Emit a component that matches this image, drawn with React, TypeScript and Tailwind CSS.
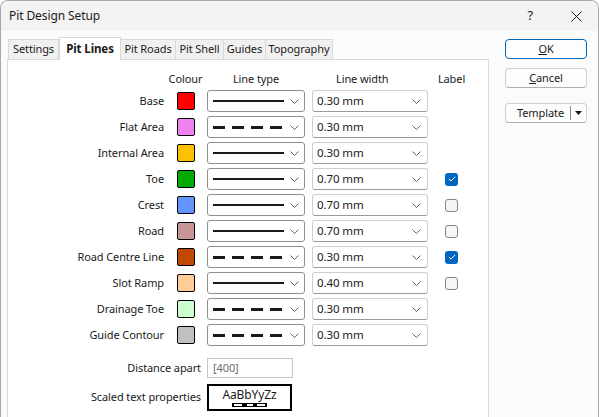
import React from "react";

type Row = {
  name: string;
  swatch: string;
  dashed: boolean;
  width: string;
  label: null | boolean;
};

const rows: Row[] = [
  { name: "Base", swatch: "bg-[#ff0000]", dashed: false, width: "0.30 mm", label: null },
  { name: "Flat Area", swatch: "bg-[#ee82ee]", dashed: true, width: "0.30 mm", label: null },
  { name: "Internal Area", swatch: "bg-[#ffc000]", dashed: false, width: "0.30 mm", label: null },
  { name: "Toe", swatch: "bg-[#00aa00]", dashed: false, width: "0.70 mm", label: true },
  { name: "Crest", swatch: "bg-[#6495ff]", dashed: false, width: "0.70 mm", label: false },
  { name: "Road", swatch: "bg-[#c89696]", dashed: false, width: "0.70 mm", label: false },
  { name: "Road Centre Line", swatch: "bg-[#c04800]", dashed: true, width: "0.30 mm", label: true },
  { name: "Slot Ramp", swatch: "bg-[#ffcc99]", dashed: false, width: "0.40 mm", label: false },
  { name: "Drainage Toe", swatch: "bg-[#ccffcc]", dashed: true, width: "0.30 mm", label: null },
  { name: "Guide Contour", swatch: "bg-[#c0c0c0]", dashed: true, width: "0.30 mm", label: null },
];

const tabs = [
  { name: "Settings", w: "w-[51px]" },
  { name: "Pit Lines", w: "w-[62px]", active: true },
  { name: "Pit Roads", w: "w-[56px]" },
  { name: "Pit Shell", w: "w-[49px]" },
  { name: "Guides", w: "w-[43px]" },
  { name: "Topography", w: "w-[68px]" },
];

// Small thin chevron used by the combo boxes
const Chevron = () => (
  <svg width="9" height="5" viewBox="0 0 9 5" className="shrink-0">
    <path d="M0.5 0.5 L4.5 4.5 L8.5 0.5" fill="none" stroke="#606060" strokeWidth="1" />
  </svg>
);

const LineSample = ({ dashed }: { dashed: boolean }) =>
  dashed ? (
    <div className="flex w-[71px] gap-[7px]">
      <div className="h-[3px] w-[12px] bg-[#1a1a1a]" />
      <div className="h-[3px] w-[12px] bg-[#1a1a1a]" />
      <div className="h-[3px] w-[12px] bg-[#1a1a1a]" />
      <div className="h-[3px] w-[12px] bg-[#1a1a1a]" />
    </div>
  ) : (
    <div className="h-[2px] w-[71px] bg-[#1a1a1a]" />
  );

const Checkbox = ({ checked }: { checked: boolean }) =>
  checked ? (
    <div className="flex h-[13px] w-[13px] items-center justify-center rounded-[3px] bg-[#0067c0]">
      <svg width="8" height="6" viewBox="0 0 8 6">
        <path d="M0.8 3 L3 5 L7.2 0.8" fill="none" stroke="white" strokeWidth="1" />
      </svg>
    </div>
  ) : (
    <div className="h-[13px] w-[13px] rounded-[3px] border border-[#858585] bg-[#f6f6f6]" />
  );

export default function App() {
  return (
    <div className="h-[417px] w-[599px] overflow-hidden rounded-t-[8px] border border-b-0 border-[#a8a8a8] bg-[#fbfbfb] font-['Noto_Sans',sans-serif] text-[11px] tracking-[-0.1px] text-[#1a1a1a]">
      {/* Title bar */}
      <div className="flex h-[30px] items-center bg-[#f3f3f3] pl-[8px]">
        <span className="text-[12px]">Pit Design Setup</span>
        <span className="ml-auto mr-[38px] text-[13px]">?</span>
        <svg width="11" height="11" viewBox="0 0 11 11" className="mr-[16px]">
          <path d="M0.5 0.5 L10.5 10.5 M10.5 0.5 L0.5 10.5" stroke="#1a1a1a" strokeWidth="1" />
        </svg>
      </div>

      <div className="flex pl-[6px] pt-[6px]">
        {/* Tabs + page */}
        <div className="flex w-[482px] flex-col">
          <div className="relative z-10 flex h-[22px] items-end pl-[1px]">
            {tabs.map((t) =>
              t.active ? (
                <div
                  key={t.name}
                  className={`${t.w} -mb-[1px] flex h-[23px] items-center justify-center border border-b-0 border-[#d9d9d9] bg-white pb-[1px] text-[11.5px] font-bold`}
                >
                  {t.name}
                </div>
              ) : (
                <div
                  key={t.name}
                  className={`${t.w} -ml-[1px] flex h-[20px] items-center justify-center border border-b-0 border-[#d9d9d9] bg-[#f0f0f0] first:ml-0`}
                >
                  {t.name}
                </div>
              )
            )}
          </div>

          <div className="h-[400px] border border-[#d9d9d9] bg-white pt-[11px]">
            {/* Column headers */}
            <div className="flex h-[17px] items-center">
              <div className="w-[156px]" />
              <div className="w-[43px] text-center">Colour</div>
              <div className="w-[98px] text-center">Line type</div>
              <div className="ml-[7px] w-[116px] pl-[24px]">Line width</div>
              <div className="w-[47px] text-center">Label</div>
            </div>

            {rows.map((r) => (
              <div key={r.name} className="flex h-[26px] items-center">
                <div className="w-[156px] text-right">{r.name}</div>
                <div className="flex w-[43px] justify-center">
                  <div className={`h-[18px] w-[18px] rounded-[2px] border border-black ${r.swatch}`} />
                </div>
                <div className="flex h-[22px] w-[98px] items-center justify-between rounded-[3px] border border-[#8f8f8f] bg-white pl-[5px] pr-[5px]">
                  <LineSample dashed={r.dashed} />
                  <Chevron />
                </div>
                <div className="ml-[7px] flex h-[22px] w-[116px] items-center justify-between rounded-[3px] border border-[#cfcfcf] border-b-[#9a9a9a] bg-white pl-[4px] pr-[6px]">
                  <span className="text-[11.5px]">{r.width}</span>
                  <Chevron />
                </div>
                <div className="flex w-[47px] justify-center">
                  {r.label !== null && <Checkbox checked={r.label} />}
                </div>
              </div>
            ))}

            {/* Distance apart */}
            <div className="mt-[10px] flex h-[20px] items-center">
              <div className="w-[193px] text-right">Distance apart</div>
              <div className="ml-[6px] flex h-[20px] w-[86px] items-center border border-[#c8c8c8] pl-[5px] text-[#6d6d6d]">
                [400]
              </div>
            </div>

            {/* Scaled text properties */}
            <div className="mt-[6px] flex h-[27px] items-center">
              <div className="w-[193px] text-right">Scaled text properties</div>
              <div className="ml-[6px] flex h-[27px] w-[85px] flex-col items-center justify-center border-2 border-black">
                <span className="text-[12px] leading-[14px]">AaBbYyZz</span>
                <div className="mt-[1px] flex h-[4px] w-[35px] items-center justify-between bg-black px-[2px]">
                  <div className="h-[2px] w-[8px] bg-white" />
                  <div className="h-[2px] w-[6px] bg-white" />
                  <div className="h-[2px] w-[8px] bg-white" />
                </div>
              </div>
            </div>
          </div>
        </div>

        {/* Buttons */}
        <div className="ml-[16px] flex w-[82px] flex-col pt-[2px]">
          <div className="flex h-[20px] items-center justify-center rounded-[4px] border border-[#0067c0] bg-[#fdfdfd]">
            <span>
              <span className="underline">O</span>K
            </span>
          </div>
          <div className="mt-[9px] flex h-[20px] items-center justify-center rounded-[4px] border border-[#d0d0d0] border-b-[#b0b0b0] bg-[#fdfdfd]">
            <span>
              <span className="underline">C</span>ancel
            </span>
          </div>
          <div className="mt-[15px] flex h-[20px] items-center rounded-[4px] border border-[#d0d0d0] border-b-[#b0b0b0] bg-[#fdfdfd]">
            <span className="ml-auto pr-[6px]">Template</span>
            <div className="h-[14px] w-px bg-[#8a8a8a]" />
            <div className="flex w-[15px] justify-center">
              <svg width="7" height="4" viewBox="0 0 7 4">
                <path d="M0 0 L7 0 L3.5 4 Z" fill="#1a1a1a" />
              </svg>
            </div>
          </div>
        </div>
      </div>
    </div>
  );
}
